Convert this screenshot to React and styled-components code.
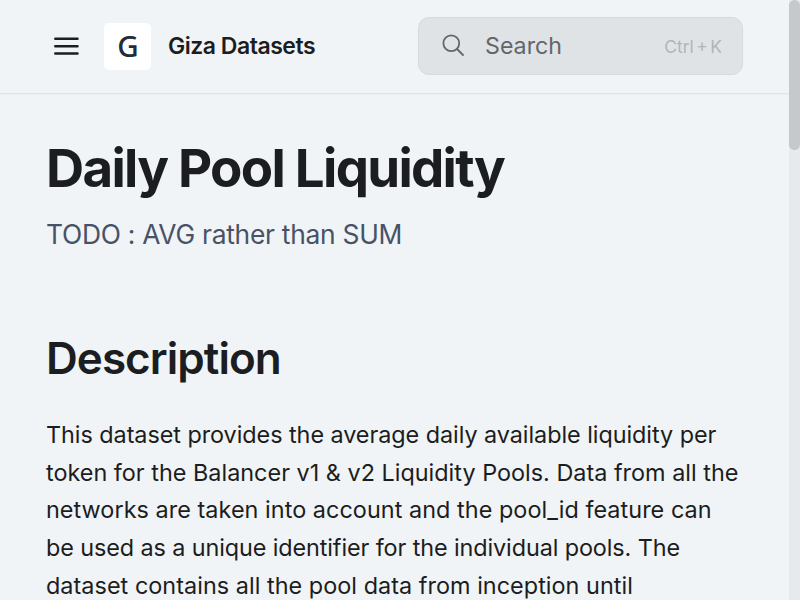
import React from 'react';
import styled, { createGlobalStyle } from 'styled-components';

const Global = createGlobalStyle`
  * { box-sizing: border-box; }
  html, body { margin: 0; height: 600px; overflow: hidden; background: #f0f4f7; }
  body { font-family: Inter, "Liberation Sans", sans-serif; color: #1c1d20; }
`;
const Page = styled.div`
  display: flex;
  width: 800px;
  height: 600px;
  overflow: hidden;
`;
const Column = styled.div`
  width: 789px;
  height: 600px;
  overflow: hidden;
`;
const Header = styled.header`
  display: flex;
  align-items: center;
  height: 94px;
  padding: 0 46px 2px 54px;
  border-bottom: 1px solid #e0e4e7;
  box-shadow: 0 1px 0 #eaeef1;
`;
const MenuIcon = styled.svg`
  width: 25px;
  height: 20px;
  flex: none;
`;
const Logo = styled.div`
  width: 47px;
  height: 47px;
  margin: 2px 17px 0 25px;
  border-radius: 5px;
  background: #fff;
  display: flex;
  align-items: center;
  justify-content: center;
  font: 500 29.5px/45px "Noto Sans", sans-serif;
  color: #242b3a;
  padding: 0 0 2px 1px;
`;
const SiteName = styled.div`
  font-size: 23px;
  font-weight: 600;
  line-height: 30px;
  letter-spacing: -0.48px;
  white-space: nowrap;
`;
const Search = styled.div`
  display: flex;
  align-items: center;
  width: 325px;
  height: 58px;
  margin-left: auto;
  padding: 0 20px 0 23px;
  border: 1px solid #d6dadd;
  border-radius: 11px;
  background: #dfe3e6;
  color: #636669;
  font-size: 23.2px;
`;
const SearchIcon = styled.svg`
  width: 23px;
  height: 23px;
  margin-right: 20px;
`;
const Shortcut = styled.span`
  margin: 2px 0 0 auto;
  font-size: 17.5px;
  word-spacing: -2.5px;
  color: #b1b5b8;
  white-space: nowrap;
`;
const Content = styled.main`
  padding: 44px 46px 0;
`;
const Title = styled.h1`
  margin: 0;
  font-size: 52.8px;
  font-weight: 700;
  line-height: 60px;
  letter-spacing: -1.7px;
`;
const Subtitle = styled.p`
  margin: 17px 0 0;
  font-size: 26.4px;
  line-height: 38px;
  letter-spacing: -0.27px;
  color: #485266;
`;
const Heading = styled.h2`
  margin: 75px 0 0;
  font-size: 44px;
  font-weight: 600;
  line-height: 60px;
  letter-spacing: -0.95px;
`;
const Paragraph = styled.p`
  margin: 28px 0 0;
  font-size: 23.4px;
  line-height: 37.7px;
  white-space: nowrap;
`;
const Line = styled.span`
  display: block;
  letter-spacing: ${({ $tracking }) => $tracking}px;
`;
const Scrollbar = styled.div`
  width: 11px;
  height: 600px;
  background: #e6eaed;
`;
const Thumb = styled.div`
  height: 150px;
  border-radius: 6px;
  background: #c5c9cc;
`;

const lines = [
  ['This dataset provides the average daily available liquidity per', -0.05],
  ['token for the Balancer v1 & v2 Liquidity Pools. Data from all the', 0.01],
  ['networks are taken into account and the pool_id feature can', 0.05],
  ['be used as a unique identifier for the individual pools. The', -0.1],
  ['dataset contains all the pool data from inception until', 0.04],
];

export default function App() {
  return (
    <Page>
      <Global />
      <Column>
        <Header>
          <MenuIcon viewBox="0 0 25 20" stroke="#1c1d20" strokeWidth="2.5" strokeLinecap="round">
            <path d="M1.3 2.8H23.5M1.3 10.2H23.5M1.3 17.5H23.5" />
          </MenuIcon>
          <Logo>G</Logo>
          <SiteName>Giza Datasets</SiteName>
          <Search>
            <SearchIcon viewBox="0 0 23 23" fill="none" stroke="#636669" strokeWidth="1.8" strokeLinecap="round">
              <circle cx="9.3" cy="9.2" r="7.9" />
              <path d="M15 15L21 21" />
            </SearchIcon>
            Search
            <Shortcut>Ctrl + K</Shortcut>
          </Search>
        </Header>
        <Content>
          <Title>Daily Pool Liquidity</Title>
          <Subtitle>TODO : AVG rather than SUM</Subtitle>
          <Heading>Description</Heading>
          <Paragraph>
            {lines.map(([text, tracking]) => (
              <Line key={text} $tracking={tracking}>{text}</Line>
            ))}
          </Paragraph>
        </Content>
      </Column>
      <Scrollbar><Thumb /></Scrollbar>
    </Page>
  );
}
